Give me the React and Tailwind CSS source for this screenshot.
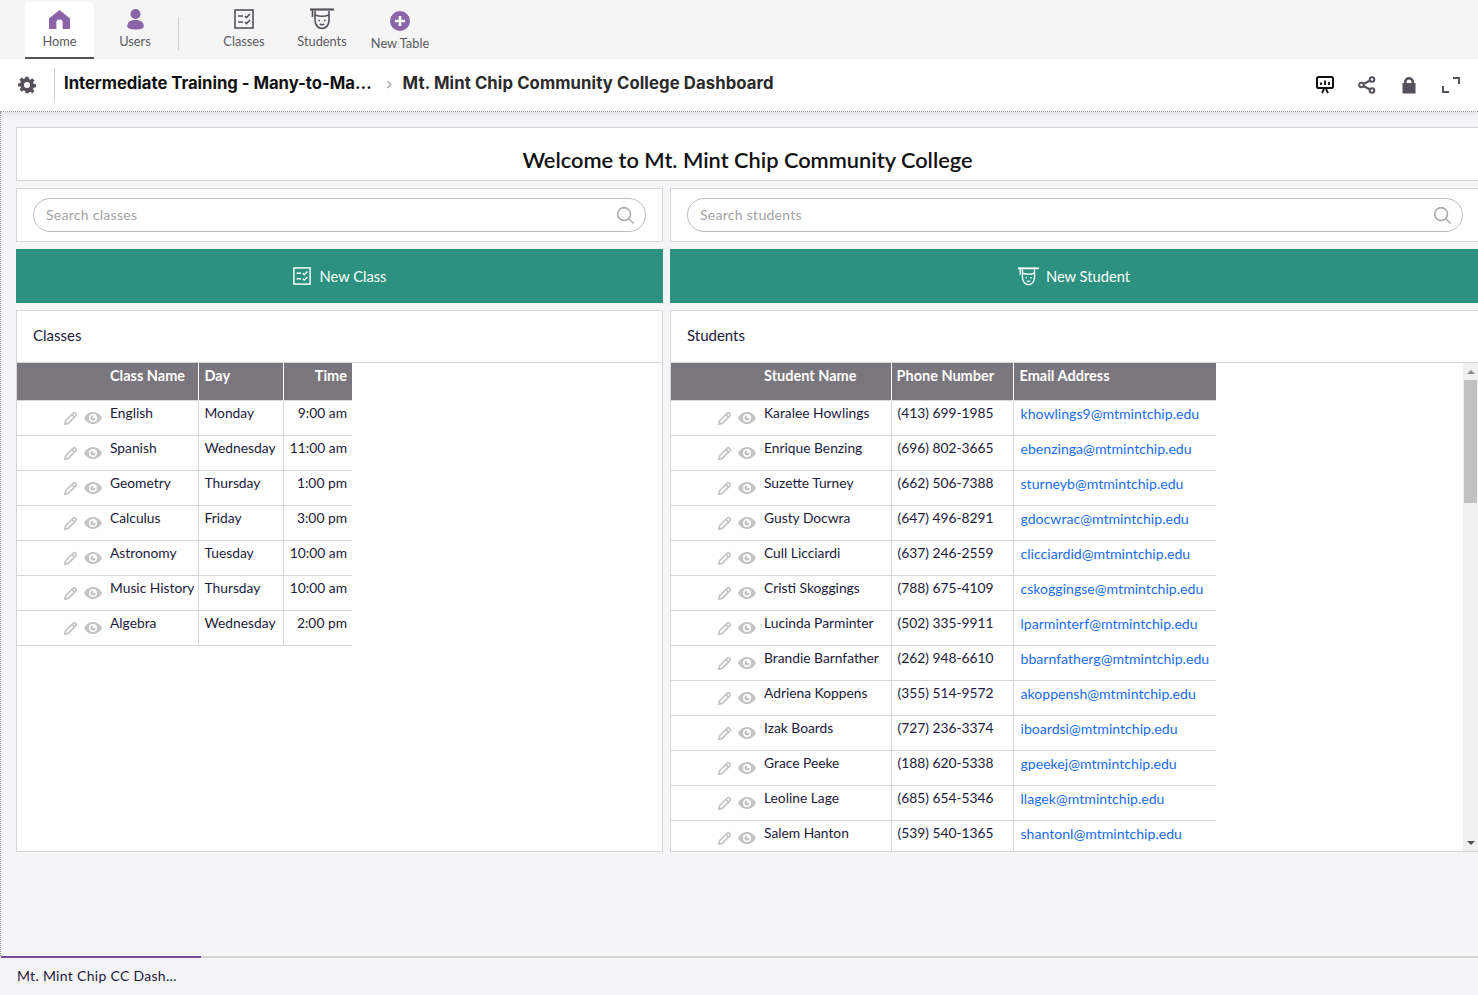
const font = { fontFamily: "Lato, 'Noto Sans', sans-serif" };

const classes = [
  ["English", "Monday", "9:00 am"],
  ["Spanish", "Wednesday", "11:00 am"],
  ["Geometry", "Thursday", "1:00 pm"],
  ["Calculus", "Friday", "3:00 pm"],
  ["Astronomy", "Tuesday", "10:00 am"],
  ["Music History", "Thursday", "10:00 am"],
  ["Algebra", "Wednesday", "2:00 pm"],
];

const students = [
  ["Karalee Howlings", "(413) 699-1985", "khowlings9@mtmintchip.edu"],
  ["Enrique Benzing", "(696) 802-3665", "ebenzinga@mtmintchip.edu"],
  ["Suzette Turney", "(662) 506-7388", "sturneyb@mtmintchip.edu"],
  ["Gusty Docwra", "(647) 496-8291", "gdocwrac@mtmintchip.edu"],
  ["Cull Licciardi", "(637) 246-2559", "clicciardid@mtmintchip.edu"],
  ["Cristi Skoggings", "(788) 675-4109", "cskoggingse@mtmintchip.edu"],
  ["Lucinda Parminter", "(502) 335-9911", "lparminterf@mtmintchip.edu"],
  ["Brandie Barnfather", "(262) 948-6610", "bbarnfatherg@mtmintchip.edu"],
  ["Adriena Koppens", "(355) 514-9572", "akoppensh@mtmintchip.edu"],
  ["Izak Boards", "(727) 236-3374", "iboardsi@mtmintchip.edu"],
  ["Grace Peeke", "(188) 620-5338", "gpeekej@mtmintchip.edu"],
  ["Leoline Lage", "(685) 654-5346", "llagek@mtmintchip.edu"],
  ["Salem Hanton", "(539) 540-1365", "shantonl@mtmintchip.edu"],
];

const ClassesIcon = ({ className, color = "#55505a" }) => (
  <svg viewBox="0 0 20 20" className={className} fill="none" stroke={color} strokeWidth="1.6">
    <rect x="1" y="1" width="18" height="18" />
    <path d="M4 7h5M4 13h5M11 7l1.500 1.500L16 5M11 13l1.500 1.500L16 11" />
  </svg>
);

const StudentIcon = ({ className, color = "#55505a" }) => (
  <svg viewBox="0 0 24 22" className={className} fill="none" stroke={color} strokeWidth="1.6">
    <path d="M0 1.500h24" strokeWidth="2.200" />
    <path d="M2.500 2v7M5 3v9c0 5 3 8.500 7 8.500s7-3.500 7-8.500V3" />
    <path d="M5 7c4 1.500 10 1.500 14 0" />
    <path d="M8.500 12.500h1.500M14 12.500h1.500M10 16c1.300 1 2.700 1 4 0" />
  </svg>
);

const Pencil = () => (
  <svg viewBox="0 0 16 16" className="w-[15px] h-[15px]" fill="none" stroke="#c4c4c4" strokeWidth="1.8">
    <path d="M2 14l.8-3.600L10.800 2.400a1.700 1.700 0 0 1 2.400 0l.4.400a1.700 1.700 0 0 1 0 2.400L5.600 13.200z" />
    <path d="M9.500 3.700l2.800 2.800" />
  </svg>
);

const Eye = () => (
  <svg viewBox="0 0 18 12" className="w-[18px] h-[12px]">
    <path fillRule="evenodd" fill="#c4c4c4" d="M9 0c4 0 7.200 2.500 9 6-1.800 3.500-5 6-9 6S1.800 9.500 0 6c1.800-3.500 5-6 9-6zm0 2a4 4 0 1 0 0 8 4 4 0 0 0 0-8z" />
    <path fill="#c4c4c4" d="M9 3.500a2.500 2.500 0 1 0 2.500 2.500H9z" />
  </svg>
);

const SearchIcon = () => (
  <svg viewBox="0 0 20 20" className="w-[19px] h-[19px]" fill="none" stroke="#a8a8a8" strokeWidth="1.6">
    <circle cx="8.500" cy="8.500" r="6.800" />
    <path d="M13.500 13.500l5 5" />
  </svg>
);

const NavItem = ({ icon, label, className = "" }) => (
  <div className={`flex flex-col items-center pt-[7px] text-[12.8px] text-[#5a5a5f] ${className}`}>
    <div className="h-[23px] flex items-center justify-center">{icon}</div>
    <span className="mt-[2px]">{label}</span>
  </div>
);

const SearchBox = ({ placeholder, className = "" }) => (
  <div className={`h-[54px] bg-white border border-[#d6d6d6] pl-4 flex items-center ${className}`}>
    <div className="h-[34px] w-full rounded-full border border-[#bdbdbd] pl-3 pr-[10px] flex items-center justify-between">
      <span className="text-[14px] text-[#a3a3a3] tracking-[0.28px] -mt-[2px]">{placeholder}</span>
      <SearchIcon />
    </div>
  </div>
);

const Actions = () => (
  <div className="flex items-center gap-[6px] absolute left-[46px] top-[10px]">
    <Pencil />
    <Eye />
  </div>
);

const headCell = "h-[37px] align-top pt-[2px] text-[14.5px] font-bold text-white border-r border-white";
const bodyCell = "align-top pt-[2px] text-[13.8px] leading-[20px] text-[#1c1a3c] border-r border-[#d6d6d6]";

export default function App() {
  return (
    <div style={font} className="w-[1478px] h-[995px] overflow-hidden flex flex-col bg-[#f5f5f8]">
      {/* Top nav */}
      <div className="h-[59px] bg-[#f5f5f6] flex items-start pl-[25px] shrink-0">
        <NavItem
          className="w-[69px] h-[57px] bg-white rounded-t mt-[2px] border-b-2 border-[#555] !pt-[6px] [&>span]:!mt-px"
          label="Home"
          icon={
            <svg viewBox="0 0 20 20" className="w-[21px] h-[21px]" fill="#8a63a9">
              <path d="M10 1L0 9v10h7v-6a3 3 0 0 1 6 0v6h7V9z" />
            </svg>
          }
        />
        <NavItem
          className="w-[82px]"
          label="Users"
          icon={
            <svg viewBox="0 0 18 24" className="w-[17px] h-[22px]" fill="#8a63a9">
              <circle cx="9" cy="6.500" r="5.500" />
              <path d="M0 20c0-5 4-7 9-7s9 2 9 7c0 2.500-4 3.500-9 3.500S0 22.500 0 20z" />
            </svg>
          }
        />
        <div className="w-px h-[33px] bg-[#cfcfcf] mt-[17px] ml-[2px]" />
        <NavItem className="w-[72px] ml-[29px]" label="Classes" icon={<ClassesIcon className="w-[20px] h-[20px]" />} />
        <NavItem className="w-[84px]" label="Students" icon={<StudentIcon className="w-[24px] h-[22px]" />} />
        <NavItem
          className="w-[72px] !pt-[9px]"
          label="New Table"
          icon={
            <svg viewBox="0 0 20 20" className="w-[20px] h-[20px]">
              <circle cx="10" cy="10" r="10" fill="#8a63a9" />
              <path d="M10 5v10M5 10h10" stroke="#fff" strokeWidth="2.600" />
            </svg>
          }
        />
      </div>

      {/* Breadcrumb */}
      <div className="h-[53px] bg-white border-b border-dotted border-[#9a9a9a] flex items-center shrink-0 shadow-[0_2px_5px_rgba(0,0,0,0.08)] relative z-10">
        <div className="w-[55px] h-[34px] pr-px border-r border-[#cfcfcf] flex items-center justify-center">
          <svg viewBox="0 0 24 24" className="w-[18px] h-[18px]" fill="#55505a">
            <path fillRule="evenodd" d="M10 1h4l.6 3.100 1.900.8 2.600-1.800 2.800 2.800-1.800 2.600.8 1.900 3.100.6v4l-3.100.6-.8 1.900 1.800 2.600-2.800 2.800-2.600-1.800-1.900.8L14 23h-4l-.6-3.100-1.900-.8-2.600 1.800-2.800-2.800 1.800-2.600-.8-1.900L0 14v-4l3.100-.6.8-1.900-1.800-2.600 2.800-2.800 2.600 1.800 1.900-.8zM12 8a4 4 0 1 0 0 8 4 4 0 0 0 0-8z" />
          </svg>
        </div>
        <span className="ml-[9px] text-[16.7px] font-bold text-[#111] -mt-[2px] tracking-[-0.03px]" style={{ fontFamily: "Inter, sans-serif" }}>
          Intermediate Training - Many-to-Ma…
        </span>
        <svg viewBox="0 0 8 10" className="w-[7px] h-[9px] ml-[14px] -mt-[2px]" fill="none" stroke="#a8a8a8" strokeWidth="1.500">
          <path d="M1.500 1l4 4-4 4" />
        </svg>
        <span className="ml-[10px] text-[16.7px] font-bold text-[#2a2a2a] -mt-[2px] tracking-[0.1px]" style={{ fontFamily: "Inter, sans-serif" }}>
          Mt. Mint Chip Community College Dashboard
        </span>
        <div className="ml-auto mr-[18px] flex items-center gap-[24px] -mt-[1px]">
          <svg viewBox="0 0 18 18" className="w-[18px] h-[18px]">
            <rect x="1" y="1" width="16" height="11" rx="1.500" fill="none" stroke="#111" strokeWidth="2" />
            <path d="M5 9V6.500M9 9V4.500M13 9V6M6 17l2-4M12 17l-2-4" stroke="#111" strokeWidth="1.800" fill="none" />
          </svg>
          <svg viewBox="0 0 18 18" className="w-[18px] h-[18px]" fill="none" stroke="#55505a" strokeWidth="2">
            <circle cx="3.500" cy="9" r="2.300" />
            <circle cx="14" cy="3.500" r="2.300" />
            <circle cx="14" cy="14.500" r="2.300" />
            <path d="M5.500 8l6.500-3.500M5.500 10l6.500 3.500" />
          </svg>
          <svg viewBox="0 0 18 18" className="w-[18px] h-[18px]" fill="#55505a">
            <path d="M4 7V6a5 5 0 0 1 10 0v1h1.500v10.500h-13V7zm2.500 0h5V6a2.500 2.500 0 0 0-5 0z" />
          </svg>
          <svg viewBox="0 0 18 18" className="w-[18px] h-[18px]" fill="none" stroke="#55505a" strokeWidth="2">
            <path d="M11 2h6v6M7 16H1v-6" />
          </svg>
        </div>
      </div>

      {/* Main */}
      <div className="flex-1 min-h-0 border-l border-dotted border-[#9a9a9a] pt-[15px] pl-[15px] flex flex-col gap-[7px]">
        <div className="h-[54px] bg-white border border-r-0 border-[#d6d6d6] flex items-end justify-center pb-[3px]">
          <h1 className="text-[21.8px] font-semibold text-[#111]">Welcome to Mt. Mint Chip Community College</h1>
        </div>

        <div className="grid grid-cols-[647px_808px] gap-x-[7px] gap-y-[7px]">
          <SearchBox placeholder="Search classes" className="pr-4" />
          <SearchBox placeholder="Search students" className="border-r-0 pr-[15px]" />

          <button className="h-[54px] bg-[#2d9180] text-white text-[14.7px] flex items-center justify-center gap-[9px]">
            <ClassesIcon className="w-[18px] h-[18px]" color="#fff" />
            New Class
          </button>
          <button className="h-[54px] bg-[#2d9180] text-white text-[14.7px] flex items-center justify-center gap-[7px]">
            <StudentIcon className="w-[21px] h-[19px]" color="#fff" />
            New Student
          </button>

          {/* Classes panel */}
          <div className="h-[542px] bg-white border border-[#d6d6d6] flex flex-col">
            <div className="h-[52px] px-4 pb-[2px] flex items-center text-[15px] text-[#1c1a3c] border-b border-[#d6d6d6] shrink-0">Classes</div>
            <table className="table-fixed border-collapse w-[335px]">
              <thead>
                <tr className="bg-[#7a767e] border-b border-[#d6d6d6]">
                  <th className={`${headCell} w-[181px] pl-[93px] text-left`}>Class Name</th>
                  <th className={`${headCell} w-[85px] pl-[6px] text-left`}>Day</th>
                  <th className={`${headCell} pr-[5px] text-right border-r-0`}>Time</th>
                </tr>
              </thead>
              <tbody>
                {classes.map((row) => (
                  <tr key={row[0]} className="h-[35px] border-b border-[#d6d6d6]">
                    <td className={`${bodyCell} pl-[93px] relative`}>
                      <Actions />
                      {row[0]}
                    </td>
                    <td className={`${bodyCell} pl-[6px]`}>{row[1]}</td>
                    <td className={`${bodyCell} pr-[5px] text-right border-r-0`}>{row[2]}</td>
                  </tr>
                ))}
              </tbody>
            </table>
          </div>

          {/* Students panel */}
          <div className="h-[542px] bg-white border border-r-0 border-[#d6d6d6] flex flex-col">
            <div className="h-[52px] px-4 pb-[2px] flex items-center text-[15px] text-[#1c1a3c] border-b border-[#d6d6d6] shrink-0">Students</div>
            <div className="flex-1 min-h-0 flex">
              <div className="flex-1 overflow-hidden">
                <table className="table-fixed border-collapse w-[545px]">
                  <thead>
                    <tr className="bg-[#7a767e] border-b border-[#d6d6d6]">
                      <th className={`${headCell} w-[220px] pl-[93px] text-left`}>Student Name</th>
                      <th className={`${headCell} w-[122px] pl-[5px] text-left`}>Phone Number</th>
                      <th className={`${headCell} pl-[6px] text-left border-r-0`}>Email Address</th>
                    </tr>
                  </thead>
                  <tbody>
                    {students.map((row) => (
                      <tr key={row[0]} className="h-[35px] border-b border-[#d6d6d6]">
                        <td className={`${bodyCell} pl-[93px] relative`}>
                          <Actions />
                          {row[0]}
                        </td>
                        <td className={`${bodyCell} pl-[6px]`}>{row[1]}</td>
                        <td className={`${bodyCell} !pt-[3px] !text-[14.1px] pl-[7px] !text-[#1a6cf0] border-r-0`}>{row[2]}</td>
                      </tr>
                    ))}
                  </tbody>
                </table>
              </div>
              {/* Scrollbar */}
              <div className="w-[15px] bg-[#f1f1f1] flex flex-col items-center shrink-0">
                <div className="h-[17px] flex items-center justify-center">
                  <div className="w-0 h-0 border-x-[4px] border-x-transparent border-b-[4px] border-b-[#8a8a8a]" />
                </div>
                <div className="w-[13px] h-[123px] bg-[#c1c1c1]" />
                <div className="mt-auto h-[17px] flex items-center justify-center">
                  <div className="w-0 h-0 border-x-[4px] border-x-transparent border-t-[4px] border-t-[#505050]" />
                </div>
              </div>
            </div>
          </div>
        </div>
      </div>

      {/* Bottom tabs */}
      <div className="h-[39px] shrink-0 border-t-2 border-[#d6d6d6] relative">
        <div className="absolute left-px -top-[2px] w-[200px] h-[2px] bg-[#7a4a9e]" />
        <div className="pl-[17px] pt-[7px] text-[14px] text-[#1c1a3c] tracking-[0.3px]">Mt. Mint Chip CC Dash...</div>
      </div>
    </div>
  );
}
